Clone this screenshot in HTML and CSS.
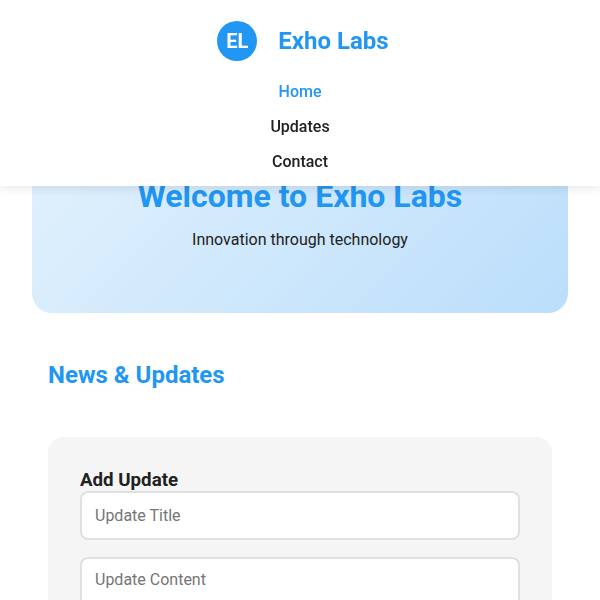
FILE: index.html
```html
<!DOCTYPE html>
<html lang="en">
<head>
    <meta charset="UTF-8" />
    <meta name="viewport" content="width=device-width, initial-scale=1.0" />
    <title>Exho Labs</title>
    <link rel="stylesheet" href="styles.css">
</head>
<body>
<header class="site-header">
    <div class="brand">
        <div class="logo">EL</div>
        <span class="brand-name">Exho Labs</span>
    </div>
    <nav>
        <ul class="nav-list">
            <li><a class="active" href="#home">Home</a></li>
            <li><a href="#updates">Updates</a></li>
            <li><a href="#contact">Contact</a></li>
        </ul>
    </nav>
</header>

<main>
    <section class="hero" id="home">
        <h1>Welcome to Exho Labs</h1>
        <p>Innovation through technology</p>
    </section>

    <section class="updates" id="updates">
        <h2>News &amp; Updates</h2>
        <form class="update-form">
            <h3>Add Update</h3>
            <input type="text" placeholder="Update Title">
            <textarea placeholder="Update Content"></textarea>
        </form>
    </section>
</main>
</body>
</html>
```

FILE: styles.css
```css
/* Reset */
* {
    box-sizing: border-box;
    margin: 0;
    padding: 0;
}

html, body {
    height: 600px;
    overflow: hidden;
}

body {
    font-family: Roboto, 'Liberation Sans', sans-serif;
    background: #fff;
    color: #212121;
    line-height: 1.6;
}

/* Header */
.site-header {
    position: fixed;
    top: 0;
    left: 0;
    width: 100%;
    height: 186px;
    padding-top: 21px;
    background: #fff;
    box-shadow: 0 2px 10px rgba(0, 0, 0, 0.1);
    z-index: 10;
}

.brand {
    display: flex;
    justify-content: center;
    align-items: center;
    gap: 21px;
    padding-left: 6px;
}

.logo {
    width: 40px;
    height: 40px;
    border-radius: 50%;
    background: #2196f3;
    color: #fff;
    font-size: 20px;
    font-weight: 700;
    display: flex;
    align-items: center;
    justify-content: center;
}

.brand-name {
    font-size: 24px;
    font-weight: 700;
    color: #2196f3;
}

.nav-list {
    list-style: none;
    display: flex;
    flex-direction: column;
    align-items: center;
    gap: 9.4px;
    margin-top: 18px;
}

.nav-list a {
    font-size: 16px;
    font-weight: 500;
    color: #212121;
    text-decoration: none;
}

.nav-list a.active {
    color: #2196f3;
}

/* Hero */
main {
    padding-top: 80px;
}

.hero {
    margin: 32px 32px 0;
    padding: 64px 32px;
    height: 201px;
    border-radius: 20px;
    background: linear-gradient(135deg, #e3f2fd, #bbdefb);
    text-align: center;
}

.hero h1 {
    font-size: 32px;
    line-height: 40px;
    font-weight: 700;
    color: #2196f3;
    margin-bottom: 11px;
}

.hero p {
    font-size: 16px;
}

/* Updates */
.updates {
    padding: 0 48px;
}

.updates h2 {
    font-size: 24px;
    font-weight: 700;
    color: #2196f3;
    margin-top: 43px;
    margin-bottom: 43px;
}

.update-form {
    background: #f5f5f5;
    border-radius: 16px;
    padding: 32px;
}

.update-form h3 {
    font-size: 18.72px;
    line-height: 22px;
    font-weight: 700;
}

.update-form input,
.update-form textarea {
    display: block;
    width: 100%;
    padding: 12.8px 13px;
    border: 2px solid #e0e0e0;
    border-radius: 8px;
    background: #fff;
    font-family: inherit;
    font-size: 16px;
    margin-bottom: 17px;
    resize: none;
}

.update-form input {
    height: 49px;
}

.update-form textarea {
    height: 120px;
    padding-top: 10.8px;
}

.update-form input::placeholder,
.update-form textarea::placeholder {
    color: #757575;
}
```
